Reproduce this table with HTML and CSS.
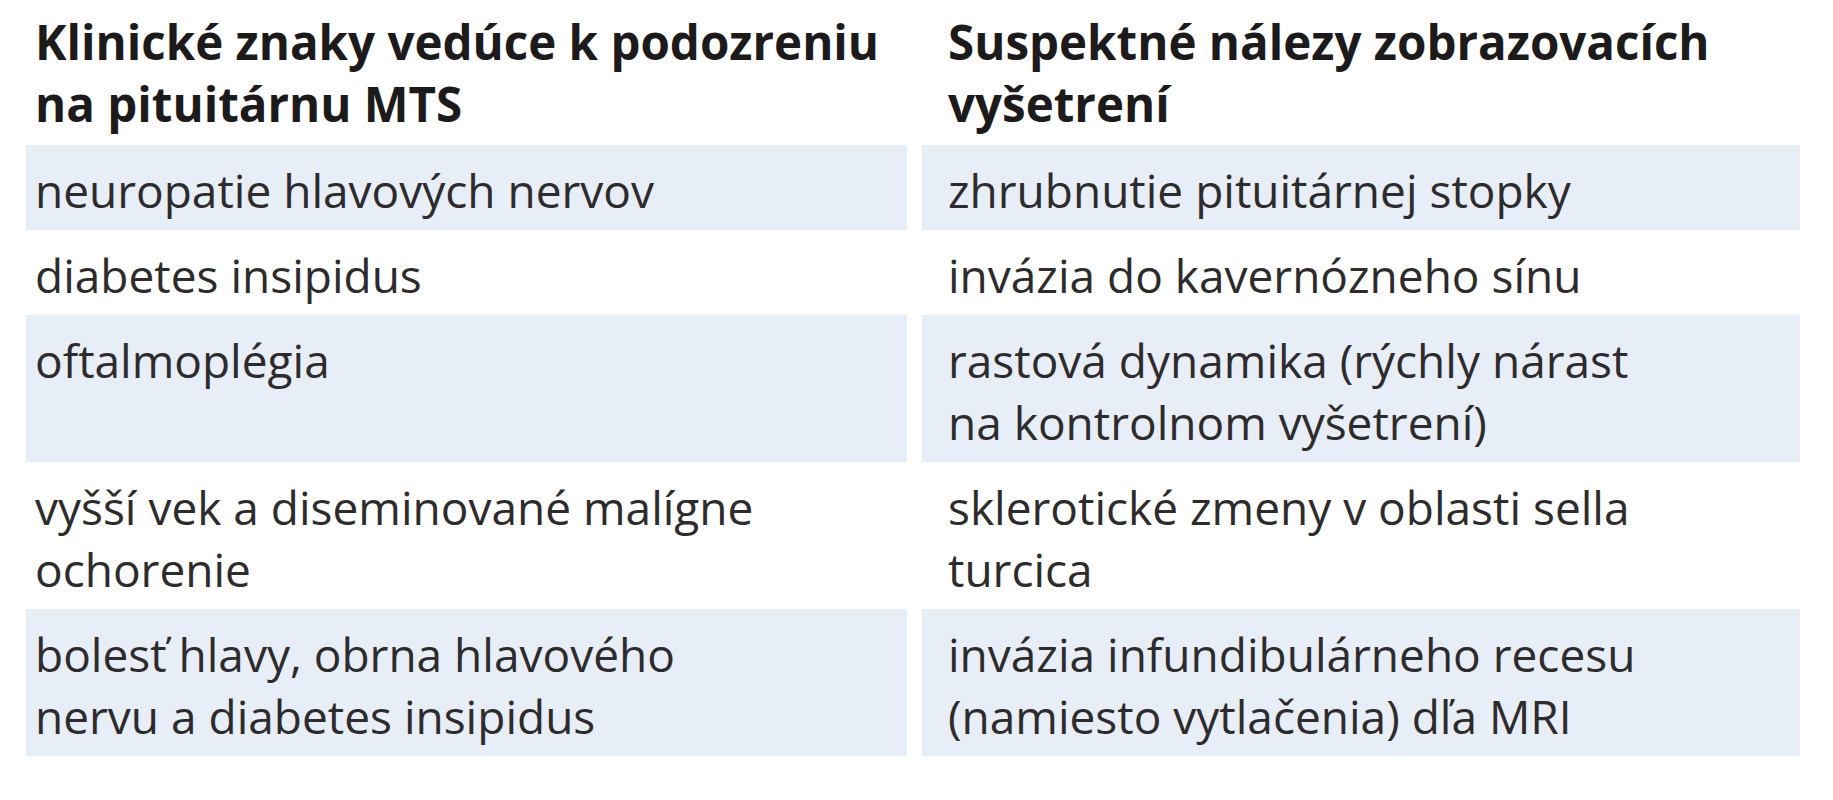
FILE: index.html
```html
<!DOCTYPE html>
<html lang="sk">
<head>
<meta charset="utf-8">
<title>Tabuľka</title>
<link rel="stylesheet" href="styles.css">
</head>
<body>
<div class="table">
  <div class="cell head left">Klinické znaky vedúce k podozreniu<br>na pituitárnu MTS</div>
  <div class="cell head right">Suspektné nálezy zobrazovacích<br>vyšetrení</div>

  <div class="cell shade left">neuropatie hlavových nervov</div>
  <div class="cell shade right">zhrubnutie pituitárnej stopky</div>

  <div class="cell left">diabetes insipidus</div>
  <div class="cell right">invázia do kavernózneho sínu</div>

  <div class="cell shade left">oftalmoplégia</div>
  <div class="cell shade right">rastová dynamika (rýchly nárast<br>na kontrolnom vyšetrení)</div>

  <div class="cell left">vyšší vek a diseminované malígne<br>ochorenie</div>
  <div class="cell right">sklerotické zmeny v oblasti sella<br>turcica</div>

  <div class="cell shade left">bolesť hlavy, obrna hlavového<br>nervu a diabetes insipidus</div>
  <div class="cell shade right">invázia infundibulárneho recesu<br>(namiesto vytlačenia) dľa MRI</div>
</div>
</body>
</html>
```

FILE: styles.css
```css
html, body {
  margin: 0;
  padding: 0;
  background: #ffffff;
}

body {
  width: 1833px;
  height: 800px;
  overflow: hidden;
  font-family: "Open Sans", "Noto Sans", "Liberation Sans", sans-serif;
  color: #2d2b2c;
}

.table {
  display: grid;
  grid-template-columns: 881px 878px;
  column-gap: 15px;
  margin-left: 26px;
}

.cell {
  font-size: 46px;
  line-height: 62px;
  padding: 14px 0 9px 0;
  white-space: nowrap;
}

.cell.left {
  padding-left: 9px;
}

.cell.right {
  padding-left: 26px;
}

.cell.head {
  font-size: 47.5px;
  font-weight: 700;
  color: #1c1a1b;
  padding-top: 11px;
  padding-bottom: 10px;
}

.cell.shade {
  background: #e8eef7;
}
```
